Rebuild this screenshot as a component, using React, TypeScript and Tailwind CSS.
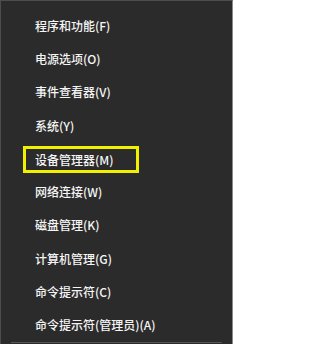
const items = [
  "程序和功能(F)",
  "电源选项(O)",
  "事件查看器(V)",
  "系统(Y)",
  "设备管理器(M)",
  "网络连接(W)",
  "磁盘管理(K)",
  "计算机管理(G)",
  "命令提示符(C)",
  "命令提示符(管理员)(A)",
];

export default function App() {
  return (
    <div
      className="w-[233px] h-[344px] overflow-hidden bg-[#2b2b2b] border-t border-l border-[#4d4d4d] border-r border-r-[#8a8a8a] text-[12px] font-medium text-[#f5f5f5]"
      style={{ fontFamily: '"Noto Sans CJK SC", "Microsoft YaHei", sans-serif' }}
    >
      <div className="pt-[8px] flex flex-col">
        {items.map((label, i) =>
          i === 4 ? (
            <div key={label} className="h-[33.3px] flex items-center">
              <div className="ml-[22px] mt-[2px] w-[116px] h-[27px] border-[3px] border-[#f0f000] flex items-center pl-[9px]">
                {label}
              </div>
            </div>
          ) : (
            <div key={label} className="h-[33.3px] flex items-center pl-[34px]">
              {label}
            </div>
          )
        )}
      </div>
      <div className="mx-[10px] h-px bg-[#555]" />
    </div>
  );
}
